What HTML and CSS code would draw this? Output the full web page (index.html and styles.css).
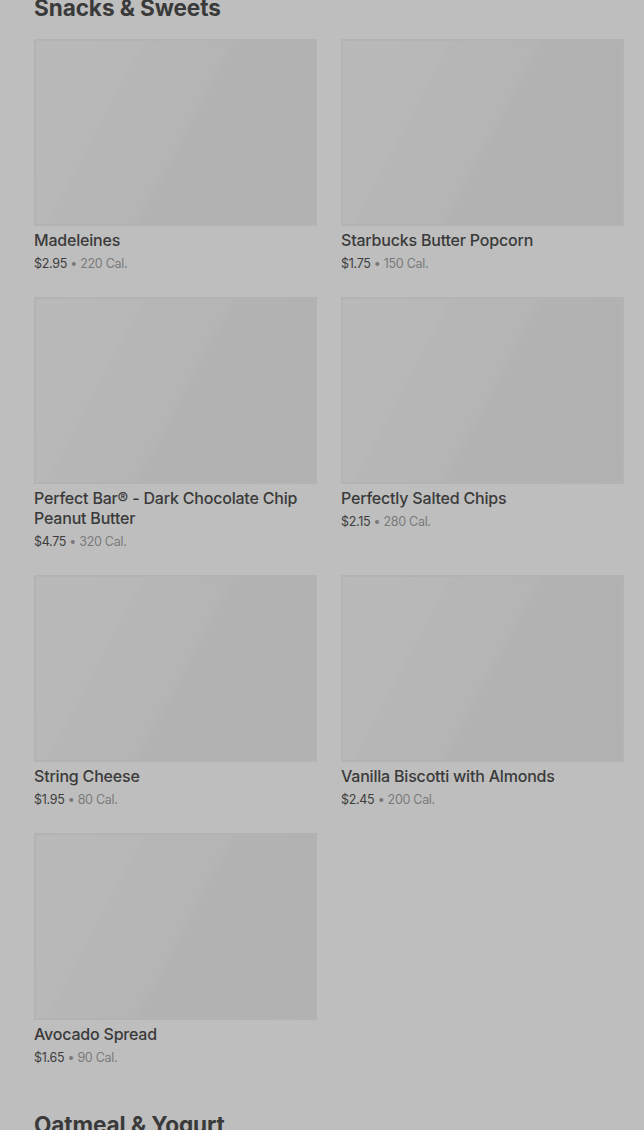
FILE: index.html
```html
<!DOCTYPE html>
<html>
<head>
<meta charset="utf-8">
<link rel="stylesheet" href="styles.css">
</head>
<body>
<div class="page">
  <section class="section">
    <h2 class="heading first">Snacks &amp; Sweets</h2>
    <div class="grid">
      <div class="card"><div class="img"></div><div class="title">Madeleines</div><div class="meta"><span class="price">$2.95</span><span class="cal"> • 220 Cal.</span></div></div>
      <div class="card"><div class="img"></div><div class="title">Starbucks Butter Popcorn</div><div class="meta"><span class="price">$1.75</span><span class="cal"> • 150 Cal.</span></div></div>
      <div class="card"><div class="img"></div><div class="title">Perfect Bar® - Dark Chocolate Chip Peanut Butter</div><div class="meta"><span class="price">$4.75</span><span class="cal"> • 320 Cal.</span></div></div>
      <div class="card"><div class="img"></div><div class="title">Perfectly Salted Chips</div><div class="meta"><span class="price">$2.15</span><span class="cal"> • 280 Cal.</span></div></div>
      <div class="card"><div class="img"></div><div class="title">String Cheese</div><div class="meta"><span class="price">$1.95</span><span class="cal"> • 80 Cal.</span></div></div>
      <div class="card"><div class="img"></div><div class="title">Vanilla Biscotti with Almonds</div><div class="meta"><span class="price">$2.45</span><span class="cal"> • 200 Cal.</span></div></div>
      <div class="card"><div class="img"></div><div class="title">Avocado Spread</div><div class="meta"><span class="price">$1.65</span><span class="cal"> • 90 Cal.</span></div></div>
    </div>
  </section>
  <section class="section">
    <h2 class="heading">Oatmeal &amp; Yogurt</h2>
  </section>
</div>
</body>
</html>
```

FILE: styles.css
```css
html, body {
  margin: 0;
  padding: 0;
  background: #bebebe;
  height: 100%;
  overflow: hidden;
}
.page {
  padding: 0 20px 0 34px;
  font-family: Inter, "Liberation Sans", sans-serif;
  color: #333333;
}
.heading {
  margin: 0;
  font-size: 22.6px;
  line-height: 28px;
  font-weight: 700;
  color: #3a3a3a;
  letter-spacing: -0.1px;
}
.heading.first {
  margin-top: -6px;
}
.section + .section {
  margin-top: 44px;
}
.grid {
  margin-top: 17px;
  display: grid;
  grid-template-columns: 283px 283px;
  column-gap: 24px;
  row-gap: 24px;
  align-items: start;
}
.img {
  height: 187px;
  background: linear-gradient(118deg, #b9b9b9 0%, #b8b8b8 28%, #b6b6b6 30%, #b5b5b5 51%, #b2b2b2 54%, #b1b1b1 100%);
  box-shadow: inset 0 0 0 2px #b3b3b3;
}
.title {
  margin-top: 4px;
  font-size: 16px;
  line-height: 20px;
  font-weight: 500;
  color: #3a3a3a;
  letter-spacing: -0.2px;
}
.meta {
  margin-top: 5px;
  font-size: 12.5px;
  line-height: 18px;
  letter-spacing: -0.3px;
}
.price {
  color: #3d3d3d;
}
.cal {
  color: #7a7a7a;
}
```
